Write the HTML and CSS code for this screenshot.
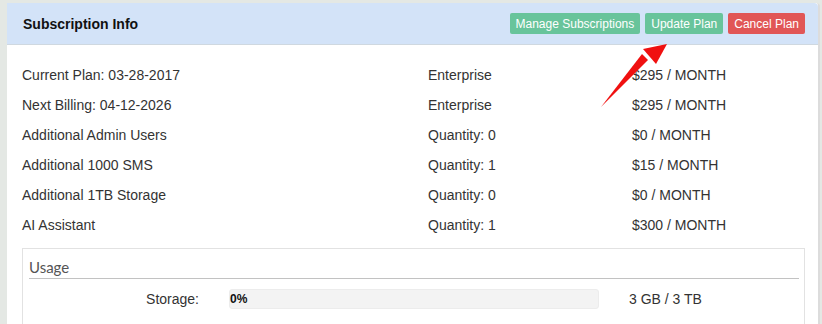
FILE: index.html
```html
<!DOCTYPE html>
<html lang="en">
<head>
  <meta charset="UTF-8">
  <title>Subscription Info</title>
  <link rel="stylesheet" href="styles.css">
</head>
<body>

<div class="panel">
  <div class="panel-head">
    <h2>Subscription Info</h2>
    <div class="actions">
      <button class="btn btn-green">Manage Subscriptions</button>
      <button class="btn btn-green">Update Plan</button>
      <button class="btn btn-red">Cancel Plan</button>
    </div>
  </div>

  <div class="panel-body">
    <div class="rows">
      <div>Current Plan: 03-28-2017</div><div>Enterprise</div><div>$295 / MONTH</div>
      <div>Next Billing: 04-12-2026</div><div>Enterprise</div><div>$295 / MONTH</div>
      <div>Additional Admin Users</div><div>Quantity: 0</div><div>$0 / MONTH</div>
      <div>Additional 1000 SMS</div><div>Quantity: 1</div><div>$15 / MONTH</div>
      <div>Additional 1TB Storage</div><div>Quantity: 0</div><div>$0 / MONTH</div>
      <div>AI Assistant</div><div>Quantity: 1</div><div>$300 / MONTH</div>
    </div>

    <div class="usage">
      <h3>Usage</h3>
      <div class="usage-row">
        <span class="usage-label">Storage:</span>
        <div class="bar"><span>0%</span></div>
        <span>3 GB / 3 TB</span>
      </div>
    </div>
  </div>
</div>

<svg class="arrow" width="80" height="75" viewBox="0 0 80 75">
  <path d="M9 70 L50 17 L56 23 Z" fill="#f01010"/>
  <path d="M75 7 L51 12 L64 27 Z" fill="#f01010"/>
</svg>

</body>
</html>
```

FILE: styles.css
```css
body {
  margin: 0;
  background: #e4e8e4;
  font-family: "Liberation Sans", Arial, sans-serif;
  color: #333;
  font-size: 14px;
}
.panel {
  margin: 3px 2px 0 7px;
  background: #fff;
  border-right: 2px solid #dcdcdc;
  border-top-right-radius: 4px;
  height: 330px;
}
.panel-head {
  display: flex;
  justify-content: space-between;
  align-items: center;
  height: 41px;
  padding: 0 13px 0 16px;
  background: #d3e3f8;
  border-bottom: 1px solid #cfd8e0;
  border-top-right-radius: 4px;
}
.panel-head h2 {
  margin: 0;
  font-size: 14px;
  color: #111;
}
.actions {
  display: flex;
  gap: 5px;
}
.btn {
  height: 21px;
  padding: 0 6px;
  border: 0;
  border-radius: 2px;
  color: #fff;
  font-family: "Liberation Sans", Arial, sans-serif;
  font-size: 12px;
}
.btn-green {
  background: #68c49b;
}
.btn-red {
  background: #e15656;
}
.panel-body {
  padding: 15px 13px 0 15px;
}
.rows {
  display: grid;
  grid-template-columns: 406px 204px 1fr;
  grid-auto-rows: 30px;
  align-items: center;
}
.usage {
  margin-top: 8px;
  border: 1px solid #e2e2e2;
  padding: 0 5px 0 6px;
  height: 80px;
}
.usage h3 {
  margin: 0;
  padding: 9px 0 2px 0;
  font-family: Lato, "Open Sans", sans-serif;
  font-weight: normal;
  font-size: 15px;
  color: #555;
  border-bottom: 1px solid #c2c2c2;
}
.usage-row {
  display: grid;
  grid-template-columns: 170px 370px 1fr;
  column-gap: 30px;
  align-items: center;
  margin-top: 10px;
}
.usage-label {
  text-align: right;
}
.bar {
  height: 20px;
  background: #f3f3f3;
  border: 1px solid #ececec;
  border-radius: 3px;
  box-sizing: border-box;
  display: flex;
  align-items: center;
  padding-left: 0;
  font-size: 12px;
  font-weight: bold;
  color: #111;
}
.arrow {
  position: absolute;
  left: 592px;
  top: 37px;
}
```
